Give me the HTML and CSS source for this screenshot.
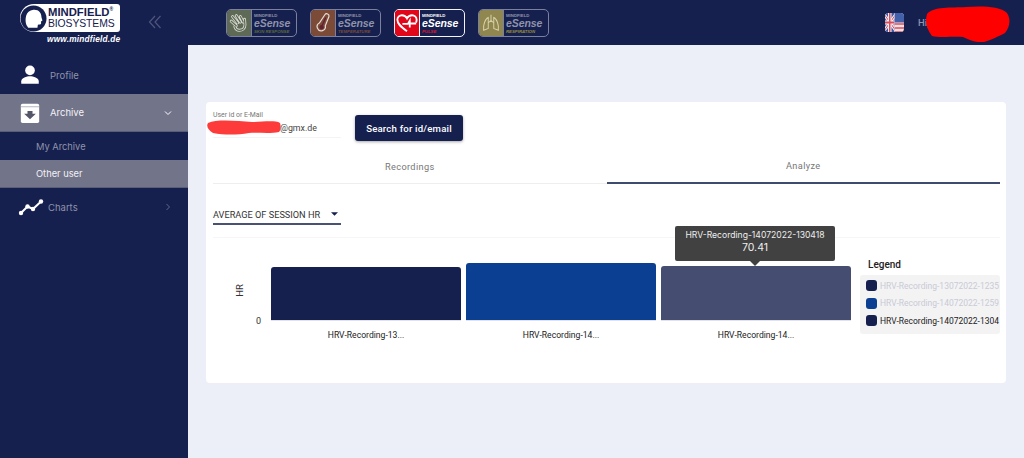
FILE: index.html
```html
<!DOCTYPE html>
<html lang="en">
<head>
<meta charset="utf-8">
<title>eSense Pulse</title>
<link rel="stylesheet" href="styles.css">
</head>
<body>
<div class="app">
  <aside class="sidebar">
    <div class="brand">
      <div class="logo">
        <svg class="logo-head" viewBox="0 0 27 27"><circle cx="13.500" cy="13.500" r="13" fill="#16204f"/><path transform="translate(1.600 1.600) scale(.88)" d="M5.500 21C3.500 15 4 4.500 13.500 3.500c6-.5 9 3.500 9 8 0 1.500 1.500 3.500 1 4.500l-1.500.8.200 2.200c0 1.500-2 1.500-3.700 1.500l-.5 3.500H7.500z" fill="#fff"/></svg>
        <div class="logo-text"><span class="logo-top">MINDFIELD<sup>®</sup></span><span class="logo-bottom">BIOSYSTEMS</span></div>
      </div>
      <div class="logo-url">www.mindfield.de</div>
    </div>
    <nav class="nav">
      <a class="nav-item">
        <svg class="nav-icon" viewBox="0 0 24 24"><circle cx="12" cy="6.500" r="5.800" fill="#fff"/><path d="M1.500 22.500v-3c0-4 6.500-6 10.500-6s10.500 2 10.500 6v3z" fill="#fff"/></svg>
        <span class="nav-label">Profile</span>
      </a>
      <a class="nav-item active">
        <svg class="nav-icon" viewBox="0 0 24 24"><path d="M1 3a2 2 0 0 1 2-2h18a2 2 0 0 1 2 2v19a2 2 0 0 1-2 2H3a2 2 0 0 1-2-2z" fill="#fff"/><path d="M1 4.500h22" stroke="#8f90a2" stroke-width=".8"/><path d="M9 9.500h6V13h4l-7 6.500L5 13h4z" fill="#555768"/></svg>
        <span class="nav-label">Archive</span>
        <svg class="nav-chev" viewBox="0 0 10 10"><path d="M2 3.500 5 6.500 8 3.500" fill="none" stroke="#fff" stroke-width="1"/></svg>
      </a>
      <a class="nav-sub">My Archive</a>
      <a class="nav-sub active">Other user</a>
      <a class="nav-item">
        <svg class="nav-icon wide" viewBox="0 0 26 18"><path d="M3 15 9.500 8.500 15 11 23 3.500" fill="none" stroke="#fff" stroke-width="2"/><g fill="#fff"><circle cx="3" cy="15" r="2.200"/><circle cx="9.500" cy="8.500" r="2.200"/><circle cx="15" cy="11" r="2.200"/><circle cx="23" cy="3.500" r="2.200"/></g></svg>
        <span class="nav-label">Charts</span>
        <svg class="nav-chev dim" viewBox="0 0 10 10"><path d="M3.500 2 6.500 5 3.500 8" fill="none" stroke="#5f6688" stroke-width="1"/></svg>
      </a>
    </nav>
  </aside>

  <div class="main">
    <header class="topbar">
      <svg class="collapse" viewBox="0 0 14 14"><path d="M7 1 1.500 7 7 13M12.500 1 7 7l5.500 6" fill="none" stroke="#4d5679" stroke-width="1.200"/></svg>
      <div class="badges">
        <div class="badge dim">
          <div class="badge-icon skin"><svg viewBox="0 0 24 24"><path d="M5 5l5.500 7M9 4l4.500 7M13.500 5l3 6M3.500 10l5.500 5M18 8l.5 6c0 4-3 6-6 6-3 0-4.500-2-5-4" fill="none" stroke="#d9dbd2" stroke-width="3.200" stroke-linecap="round"/><path d="M5 5l5.500 7M9 4l4.500 7M13.500 5l3 6M3.500 10l5.500 5M18 8l.5 6c0 4-3 6-6 6-3 0-4.500-2-5-4" fill="none" stroke="#5e6a56" stroke-width="1.400" stroke-linecap="round"/><path d="M10 13l3 4 4-3" fill="#5e6a56"/></svg></div>
          <div class="badge-text"><span class="b-brand">MINDFIELD</span><span class="b-name">eSense</span><span class="b-type skin-t">SKIN RESPONSE</span></div>
        </div>
        <div class="badge dim">
          <div class="badge-icon temp"><svg viewBox="0 0 24 24"><path d="M14 3a2.500 2.500 0 0 1 4.500 2l-4 10a4.500 4.500 0 1 1-6.500-3z" fill="none" stroke="#e6ddd8" stroke-width="1.300"/><path d="M15 6l-4 9" stroke="#642033" stroke-width="1.500"/><circle cx="10.500" cy="16.500" r="2.300" fill="#642033"/></svg></div>
          <div class="badge-text"><span class="b-brand">MINDFIELD</span><span class="b-name">eSense</span><span class="b-type temp-t">TEMPERATURE</span></div>
        </div>
        <div class="badge active">
          <div class="badge-icon pulse"><svg viewBox="0 0 24 24"><path d="M12 21C5 16 1.500 13 1.500 8.500 1.500 5.500 4 3.500 6.500 3.500 9 3.500 11 5 12 7c1-2 3-3.500 5.500-3.500 2.500 0 5 2 5 5 0 1-.2 2-.7 3" fill="none" stroke="#fff" stroke-width="2"/><path d="M7 13h6l2-3.500v3H22M15 12.500V17" fill="none" stroke="#fff" stroke-width="2"/></svg></div>
          <div class="badge-text"><span class="b-brand">MINDFIELD</span><span class="b-name">eSense</span><span class="b-type pulse-t">PULSE</span></div>
        </div>
        <div class="badge dim">
          <div class="badge-icon resp"><svg viewBox="0 0 24 24"><path d="M12 3v8M12 9l-3 3M12 9l3 3M9 6c-3 1-6 8-5 14l5-2zM15 6c3 1 6 8 5 14l-5-2z" fill="none" stroke="#d8d1a6" stroke-width="1.100"/></svg></div>
          <div class="badge-text"><span class="b-brand">MINDFIELD</span><span class="b-name">eSense</span><span class="b-type resp-t">RESPIRATION</span></div>
        </div>
      </div>
      <div class="user">
        <svg class="flag" viewBox="0 0 19 19"><defs><clipPath id="fl"><rect width="19" height="19" rx="3.500"/></clipPath><clipPath id="flh"><rect width="9.500" height="19"/></clipPath></defs><g clip-path="url(#fl)"><rect width="19" height="19" fill="#f3e3e6"/><rect x="9.500" width="9.500" height="9.500" fill="#4360ab"/><rect x="9.500" y="10" width="9.500" height="2" fill="#e3737f"/><rect x="9.500" y="14" width="9.500" height="2" fill="#e3737f"/><rect x="9.500" y="18" width="9.500" height="1" fill="#e3737f"/><g clip-path="url(#flh)"><rect width="9.500" height="19" fill="#3c58a6"/><path d="M-1 1 11 18M11 1-1 18" stroke="#f2f0f2" stroke-width="3"/><path d="M-1 1 11 18M11 1-1 18" stroke="#dc4a5c" stroke-width="1"/><rect x="3" width="3.500" height="19" fill="#f2f0f2"/><rect y="7.500" width="9.500" height="4" fill="#f2f0f2"/><rect x="4" width="1.500" height="19" fill="#dc4a5c"/><rect y="8.500" width="9.500" height="2" fill="#dc4a5c"/></g></g></svg>
        <span class="hi">Hi,</span>
        <svg class="redact redact-name" viewBox="0 0 84 36"><path d="M1 8C8 0 25 2 40 1c15-1 34-1 41 6 4 6 3 14-2 20-8 4-12 6-21 9-8 1-15-2-21-5-8-1-24 1-31-1C0 22-1 15 1 8z" fill="#fe0000"/></svg>
      </div>
    </header>

    <main class="content">
      <section class="card">
        <div class="search">
          <div class="field">
            <label class="field-label">User id or E-Mail</label>
            <div class="field-value">@gmx.de</div>
            <svg class="redact redact-mail" viewBox="0 0 74 15"><path d="M1 3C10-1 30 1 45 2c10 0 23-2 28 1 1 3 1 7-1 9-10 2-22 0-30 1-12 2-25 2-36 0C1 10-1 6 1 3z" fill="#fd3b3b"/></svg>
          </div>
          <button class="search-btn">Search for id/email</button>
        </div>
        <div class="tabs">
          <div class="tab">Recordings</div>
          <div class="tab active">Analyze</div>
        </div>
        <div class="select">
          <span>AVERAGE OF SESSION HR</span>
          <svg class="caret" viewBox="0 0 10 5"><path d="M0 0h10L5 5z" fill="#16204f"/></svg>
        </div>
        <div class="chart">
          <div class="y-axis">
            <span class="y-title">HR</span>
            <span class="y-zero">0</span>
          </div>
          <div class="plot">
            <div class="bar-col">
              <div class="bar-slot"><div class="bar c1"></div></div>
              <div class="bar-label">HRV-Recording-13...</div>
            </div>
            <div class="bar-col">
              <div class="bar-slot"><div class="bar c2"></div></div>
              <div class="bar-label">HRV-Recording-14...</div>
            </div>
            <div class="bar-col">
              <div class="bar-slot">
                <div class="tooltip"><div>HRV-Recording-14072022-130418</div><div class="tip-val">70.41</div></div>
                <div class="bar c3"></div>
              </div>
              <div class="bar-label">HRV-Recording-14...</div>
            </div>
          </div>
          <div class="legend">
            <div class="legend-title">Legend</div>
            <div class="legend-box">
              <div class="legend-row off"><i class="sw s1"></i><span>HRV-Recording-13072022-1235</span></div>
              <div class="legend-row off"><i class="sw s2"></i><span>HRV-Recording-14072022-1259</span></div>
              <div class="legend-row"><i class="sw s1"></i><span>HRV-Recording-14072022-1304</span></div>
            </div>
          </div>
        </div>
      </section>
    </main>
  </div>
</div>
</body>
</html>
```
FILE: styles.css
```css
* { box-sizing: border-box; }
html, body { margin: 0; height: 100%; overflow: hidden; }
body { font-family: "Roboto", "Liberation Sans", sans-serif; background: #eceff8; color: #222; }
.app { display: flex; height: 458px; width: 1024px; }

.sidebar { width: 188px; flex: none; background: #16204f; color: #fff; font-family: "Inter", "Open Sans", sans-serif; }
.brand { height: 56px; padding: 4px 0 0 20px; }
.logo { width: 100px; height: 28px; background: #fff; border-radius: 14px 3px 3px 14px; display: flex; align-items: center; gap: 1px; }
.logo-head { width: 27px; height: 27px; flex: none; }
.logo-text { display: flex; flex-direction: column; font-family: "Liberation Sans", sans-serif; color: #16204f; line-height: 11px; }
.logo-top { font-size: 11.300px; font-weight: 700; white-space: nowrap; }
.logo-top sup { font-size: 5px; line-height: 0; vertical-align: 5px; }
.logo-bottom { font-size: 10.400px; letter-spacing: -.1px; }
.logo-url { font-family: "Liberation Sans", sans-serif; font-size: 8.300px; font-weight: 700; font-style: italic; color: #fff; margin: 2px 0 0 27px; letter-spacing: .2px; }

.nav { display: flex; flex-direction: column; }
.nav-item { height: 38px; display: flex; align-items: center; padding-left: 20px; position: relative; }
.nav-item.active { background: #72748a; border-bottom: 1px solid #5a5d78; }
.nav-icon { width: 20px; height: 20px; flex: none; margin-right: 10px; }
.nav-icon.wide { width: 26px; height: 18px; margin: 0 4px 0 -2px; }
.nav-label { font-size: 9.500px; color: #8f93aa; }
.nav-item.active .nav-label { color: #f2f2f6; }
.nav-chev { width: 10px; height: 10px; position: absolute; right: 15px; top: 50%; margin-top: -5px; }
.nav-sub { height: 28px; display: flex; align-items: center; padding-left: 36px; font-size: 9.300px; color: #8f93aa; }
.nav-sub.active { background: #72748a; color: #f2f2f6; border-bottom: 1px solid #5a5d78; }

.main { flex: 1; min-width: 0; display: flex; flex-direction: column; }
.topbar { height: 45px; background: #16204f; display: flex; align-items: center; position: relative; flex: none; }
.collapse { width: 14px; height: 14px; position: absolute; left: -40px; top: 15px; }
.badges { display: flex; gap: 13px; margin-left: 38px; }
.badge { width: 71px; height: 28px; border: 1px solid #7b809c; border-radius: 5px; display: flex; overflow: hidden; background: #16204f; }
.badge.active { border-color: #f4f4f8; }
.badge-icon { width: 25px; flex: none; display: flex; align-items: center; justify-content: center; border-right: 1px solid #7b809c; }
.active .badge-icon { border-right-color: #fff; }
.badge-icon svg { width: 22px; height: 22px; }
.skin { background: #5e6a56; }
.temp { background: #7c4b37; }
.pulse { background: #e2061b; }
.resp { background: #8f8650; }
.badge-text { display: flex; flex-direction: column; padding: 3px 0 0 2px; font-family: "Liberation Sans", sans-serif; min-width: 0; white-space: nowrap; }
.b-brand { font-size: 4.300px; line-height: 5px; font-weight: 700; color: #fff; }
.b-name { font-size: 10.500px; line-height: 11px; font-weight: 700; font-style: italic; color: #fff; letter-spacing: -.1px; }
.b-type { font-size: 4.300px; line-height: 5px; font-weight: 700; font-style: italic; }
.dim .b-brand, .dim .b-name { color: #8f93aa; }
.skin-t { color: #5e6a3a; }
.temp-t { color: #7c4b37; }
.pulse-t { color: #e2142c; }
.resp-t { color: #9c9040; }
.user { position: absolute; left: 697px; top: 13px; display: flex; align-items: center; }
.flag { width: 19px; height: 19px; flex: none; }
.hi { font-size: 9px; font-weight: 600; color: #8f93aa; margin-left: 14px; font-family: "Inter", sans-serif; }
.redact { position: absolute; display: block; }
.redact-name { left: 41px; top: -7px; width: 84px; height: 36px; }

.content { flex: 1; padding: 57px 18px 0; min-height: 0; }
.card { width: 800px; height: 281px; background: #fff; border-radius: 4px; padding: 0 6px 0 7px; }
.search { display: flex; align-items: flex-start; height: 53px; padding-top: 13px; }
.field { width: 128px; height: 23px; border-bottom: 1px solid #f4f4f6; position: relative; padding-top: 8px; margin-right: 14px; }
.field-label { position: absolute; top: -4px; left: 0; font-size: 6.900px; color: #777; white-space: nowrap; }
.field-value { font-size: 8.800px; color: #444; padding-left: 67px; line-height: 11px; }
.redact-mail { left: -6px; top: 5px; width: 74px; height: 15px; }
.search-btn { width: 108px; height: 26px; border: 0; border-radius: 3px; background: #16204f; color: #fff; font: 500 9.600px "Roboto", sans-serif; letter-spacing: .2px; box-shadow: 0 1px 3px rgba(0,0,0,.35); }
.tabs { display: flex; height: 29px; border-bottom: 1px solid #eeeef0; }
.tab { flex: 1; display: flex; align-items: center; justify-content: center; font-size: 9.200px; color: #777; padding-bottom: 6px; letter-spacing: .35px; }
.tab.active { border-bottom: 2px solid #3f4a6f; margin-bottom: -1px; }
.select { margin-top: 24px; width: 128px; height: 17px; border-bottom: 2px solid #4a5274; display: flex; align-items: center; justify-content: space-between; font-size: 9.200px; color: #333; padding-right: 3px; padding-bottom: 3px; }
.caret { width: 7px; height: 4px; }

.chart { margin-top: 12px; height: 118px; border-top: 1px solid #f6f6f8; display: flex; }
.y-axis { width: 58px; flex: none; position: relative; font-size: 9px; color: #333; }
.y-title { position: absolute; left: 20px; top: 47px; font-size: 9.500px; transform: rotate(-90deg); }
.y-zero { position: absolute; right: 10px; top: 78px; }
.plot { width: 580px; flex: none; display: flex; gap: 5px; }
.bar-col { width: 190px; flex: none; display: flex; flex-direction: column; }
.bar-slot { height: 83px; display: flex; align-items: flex-end; position: relative; border-bottom: 1px solid #e2e3ea; }
.bar { width: 100%; border-radius: 3px 3px 0 0; }
.c1 { height: 53px; background: #16204f; }
.c2 { height: 57px; background: #0b3f91; }
.c3 { height: 54px; background: #454e70; }
.bar-label { font-size: 8.600px; color: #222; text-align: center; margin-top: 9px; }
.tooltip { position: absolute; left: 14px; top: -12px; width: 160px; height: 35px; background: #414141; border-radius: 2px; color: #eee; font-size: 8.600px; text-align: center; padding-top: 4px; line-height: 11px; font-family: "Inter", sans-serif; }
.tooltip::after { content: ""; position: absolute; left: 75px; top: 35px; border: 5px solid transparent; border-top-color: #414141; border-bottom: 0; }
.tip-val { font-size: 10.500px; line-height: 14px; }
.legend { margin-left: 9px; width: 140px; padding-top: 21px; flex: none; }
.legend-title { font-size: 10px; font-weight: 500; color: #222; padding-left: 8px; line-height: 12px; margin-bottom: 4px; }
.legend-box { height: 59px; background: #f3f3f4; border-radius: 3px; padding: 2px 0 0 6px; overflow: hidden; }
.legend-row { display: flex; align-items: center; height: 17.500px; font-size: 8.500px; color: #222; white-space: nowrap; }
.legend-row.off { color: #c9cad4; }
.sw { width: 11px; height: 11px; border-radius: 3px; margin-right: 3px; flex: none; }
.s1 { background: #16204f; }
.s2 { background: #0b3f91; }
```
